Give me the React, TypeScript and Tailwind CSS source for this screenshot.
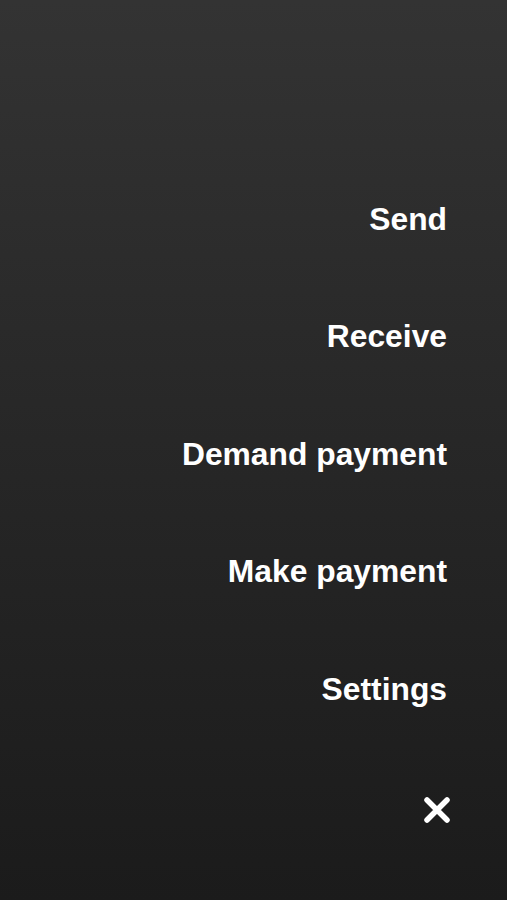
import React from "react";

export default function App() {
  const items = ["Send", "Receive", "Demand payment", "Make payment", "Settings"];
  return (
    <div className="w-full h-[900px] overflow-hidden bg-gradient-to-b from-[#333333] to-[#1b1b1b] flex flex-col items-end pr-[60px] pt-[161px]" style={{ fontFamily: '"Liberation Sans", Arial, sans-serif' }}>
      {items.map((t) => (
        <div key={t} className="h-[117.5px] flex items-center text-white font-bold text-[31.8px] leading-none">
          {t}
        </div>
      ))}
      <div className="mt-[48px] -mr-[3px] w-[26px] h-[26px]">
        <svg viewBox="0 0 26 26" width="26" height="26">
          <path d="M3 3 L23 23 M23 3 L3 23" stroke="white" strokeWidth="5.5" strokeLinecap="round" />
        </svg>
      </div>
    </div>
  );
}
